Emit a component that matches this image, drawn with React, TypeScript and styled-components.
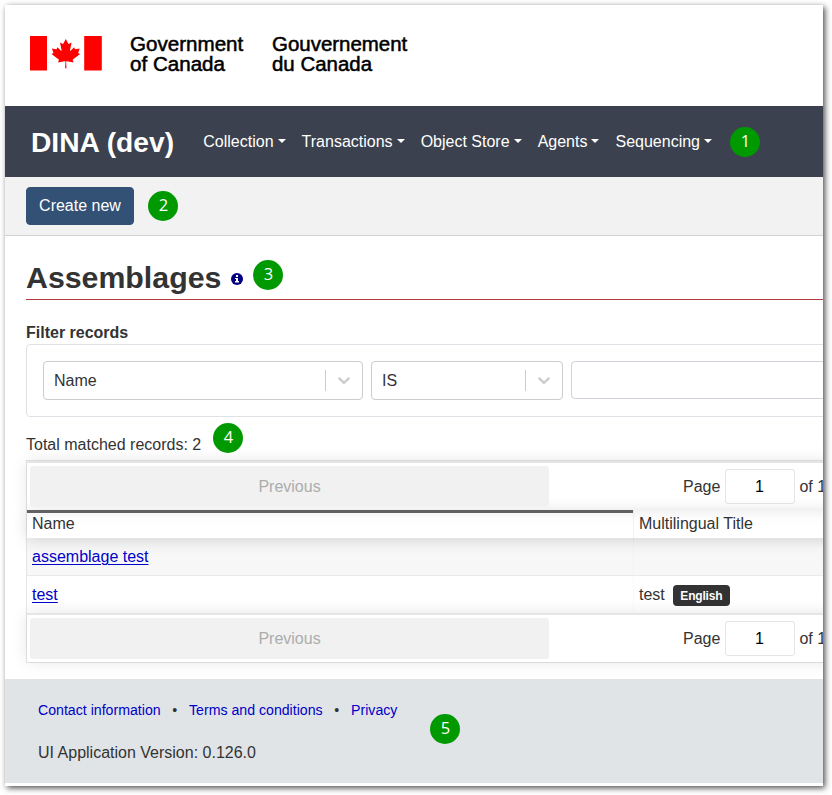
import React from "react";
import styled, { createGlobalStyle } from "styled-components";

const GlobalStyle = createGlobalStyle`
  * { box-sizing: border-box; }
  body {
    margin: 0;
    background: #fff;
    color: #333;
    font: 16px/24px "Liberation Sans", Arial, sans-serif;
    overflow: hidden;
  }
`;

const Stage = styled.div`
  width: 832px;
  height: 795px;
  padding: 5px 9px 9px 5px;
  position: relative;
  overflow: hidden;
`;

const Page = styled.div`
  width: 818px;
  height: 781px;
  overflow: hidden;
  background: #fff;
  box-shadow: 2px 2px 6px 0 rgba(0, 0, 0, 0.7);
`;

const Header = styled.header`
  height: 101px;
  padding: 26px 0 0 25px;
`;

const Nav = styled.nav`
  height: 71px;
  padding: 0 26px;
  display: flex;
  background: #3b414e;
  color: #fff;
`;

const Brand = styled.div`
  width: 172.3px;
  font-size: 28.2px;
  line-height: 72px;
  font-weight: 700;
  white-space: nowrap;
`;

const Menu = styled.div`
  display: flex;
  gap: 16.05px;
  line-height: 72px;
`;

const MenuItem = styled.span`
  white-space: nowrap;
  &::after {
    content: "";
    display: inline-block;
    margin-left: 4px;
    vertical-align: 4px;
    border-top: 4.8px solid;
    border-left: 4.8px solid transparent;
    border-right: 4.8px solid transparent;
  }
`;

const Toolbar = styled.div`
  height: 59px;
  padding: 10px 21px;
  background: #f2f2f2;
  border-bottom: 1px solid #d3d3d3;
`;

const CreateButton = styled.button`
  display: block;
  width: 108px;
  height: 38px;
  padding: 0;
  border: 1px solid #335075;
  border-radius: 4px;
  background: #335075;
  color: #fff;
  font: inherit;
`;

const Content = styled.main`
  height: 443px;
  padding-left: 21px;
`;

const Title = styled.h1`
  display: flex;
  align-items: center;
  margin: 0;
  height: 64px;
  padding-top: 20px;
  border-bottom: 1px solid #af3c43;
  font-size: 30.3px;
  line-height: 42px;
`;

const InfoIcon = styled.svg`
  margin: 3px 0 0 10px;
`;

const Label = styled.div`
  margin: 21px 0 -1px;
  font-weight: 700;
`;

const FilterBox = styled.div`
  width: 1000px;
  height: 73px;
  padding: 16px;
  display: flex;
  gap: 8px;
  border: 1px solid #dee2e6;
  border-radius: 4px;
`;

const Select = styled.div<{ $width: number }>`
  display: flex;
  align-items: center;
  width: ${(p) => p.$width}px;
  height: 39px;
  flex: none;
  padding-left: 10px;
  border: 1px solid #ccc;
  border-radius: 4px;
`;

const SelectValue = styled.span`
  flex: 1;
  line-height: 38px;
  height: 37px;
`;

const Divider = styled.span`
  width: 1px;
  height: 21px;
  background: #ccc;
`;

const Chevron = styled.svg`
  margin: -1px 8px 0;
`;

const TextInput = styled.div`
  width: 400px;
  height: 38px;
  border: 1px solid #ced4da;
  border-radius: 4px;
`;

const Total = styled.div`
  margin: 16px 0 3px;
`;

const Table = styled.div`
  width: 1824px;
  border: 1px solid rgba(0, 0, 0, 0.1);
`;

const Pagination = styled.div`
  position: relative;
  z-index: 1;
  height: 49px;
  display: flex;
  align-items: center;
  padding: 3px;
  border-top: 2px solid rgba(0, 0, 0, 0.1);
  box-shadow: 0 0 15px 0 rgba(0, 0, 0, 0.1);
`;

const Previous = styled.div`
  width: 519px;
  height: 41px;
  border-radius: 3px;
  background: #f1f1f1;
  color: #acacac;
  line-height: 42px;
  text-align: center;
`;

const PageInfo = styled.div`
  display: flex;
  align-items: center;
  margin-left: 134px;
  line-height: 40px;
  gap: 4.5px;
`;

const PageNumber = styled.span`
  width: 70px;
  height: 35px;
  padding-right: 1px;
  border: 1px solid rgba(0, 0, 0, 0.1);
  border-radius: 3px;
  color: #000;
  line-height: 33px;
  text-align: center;
`;

const HeadRow = styled.div`
  position: relative;
  display: flex;
  height: 28px;
  box-shadow: 0 2px 15px 0 rgba(0, 0, 0, 0.15);
`;

const HeadCell = styled.div<{ $sorted?: boolean }>`
  width: 607px;
  padding: 2px 5px;
  border-right: 1px solid rgba(0, 0, 0, 0.05);
  box-shadow: ${(p) => (p.$sorted ? "inset 0 3px 0 0 rgba(0,0,0,.6)" : "none")};
`;

const Row = styled.div<{ $odd?: boolean }>`
  display: flex;
  height: ${(p) => (p.$odd ? 38 : 37)}px;
  background: ${(p) => (p.$odd ? "rgba(0,0,0,.03)" : "transparent")};
  border-bottom: ${(p) => (p.$odd ? "1px solid rgba(0,0,0,.05)" : "0")};
`;

const Cell = styled.div`
  display: flex;
  gap: 8px;
  width: 607px;
  padding: 7px 5px;
  border-right: 1px solid rgba(0, 0, 0, 0.02);
`;

const RecordLink = styled.a`
  color: #0000c8;
  text-decoration: underline;
  text-underline-offset: 2px;
  text-decoration-thickness: 1px;
`;

const Language = styled.span`
  width: 57px;
  height: 21px;
  margin-top: 2px;
  border-radius: 4px;
  background: #333;
  color: #fff;
  font-size: 12px;
  font-weight: 700;
  letter-spacing: -0.2px;
  line-height: 22px;
  text-align: center;
`;

const Footer = styled.footer`
  height: 104px;
  padding: 19px 33px;
  background: #e0e4e7;
`;

const FooterLinks = styled.div`
  display: flex;
  font-size: 14.15px;
`;

const FooterLink = styled.a`
  color: #0000c8;
`;

const Bullet = styled.span`
  width: 28.4px;
  text-align: center;
`;

const Version = styled.div`
  margin-top: 19px;
`;

const Marker = styled.span<{ $x: number; $y: number }>`
  position: absolute;
  z-index: 3;
  left: ${(p) => p.$x}px;
  top: ${(p) => p.$y}px;
  width: 30px;
  height: 30px;
  border-radius: 50%;
  background: #090;
  color: #fff;
  font: 16.5px/28px "Open Sans", sans-serif;
  text-align: center;
`;

const menus = ["Collection", "Transactions", "Object Store", "Agents", "Sequencing"];
const markers = [
  [730.4, 127.4],
  [148.4, 191.4],
  [253.4, 260.4],
  [213.4, 423.4],
  [430.4, 714.4],
];

const Wordmark = () => (
  <svg width="400" height="50" viewBox="30 31 400 50" role="img" aria-label="Government of Canada">
    <path fill="#f00" d="M30 36h17v34.500H30zM84.200 36h17.600v34.500H84.200z" />
    <path
      fill="#f00"
      transform="translate(65.800 53.500) scale(.0077 .0073)"
      d="M-90 2030l45-863a95 95 0 0 0-111-98l-859 151 116-320a65 65 0 0 0-20-73l-941-762 212-99a65 65 0 0 0 34-79l-186-572 542 115a65 65 0 0 0 73-38l105-247 423 454a65 65 0 0 0 111-57l-204-1052 327 189a65 65 0 0 0 91-27l332-652 332 652a65 65 0 0 0 91 27l327-189-204 1052a65 65 0 0 0 111 57l423-454 105 247a65 65 0 0 0 73 38l542-115-186 572a65 65 0 0 0 34 79l212 99-941 762a65 65 0 0 0-20 73l116 320-859-151a95 95 0 0 0-111 98l45 863z"
    />
    <g fontSize="19.500" fill="#000" stroke="#000" strokeWidth=".5">
      <text x="130" y="50.500" textLength="113.300" lengthAdjust="spacingAndGlyphs">Government</text>
      <text x="130" y="70.500" textLength="95" lengthAdjust="spacingAndGlyphs">of Canada</text>
      <text x="272" y="50.500" textLength="135.300" lengthAdjust="spacingAndGlyphs">Gouvernement</text>
      <text x="272" y="70.500" textLength="100" lengthAdjust="spacingAndGlyphs">du Canada</text>
    </g>
  </svg>
);

const Dropdown = ({ value, width }: { value: string; width: number }) => (
  <Select $width={width}>
    <SelectValue>{value}</SelectValue>
    <Divider />
    <Chevron width="20" height="20" viewBox="0 0 20 20" fill="#ccc">
      <path d="M4.516 7.548c.436-.446 1.043-.481 1.576 0L10 11.295l3.908-3.747c.533-.481 1.141-.446 1.574 0 .436.445.408 1.197 0 1.615-.406.418-4.695 4.502-4.695 4.502a1.095 1.095 0 0 1-1.576 0S4.924 9.581 4.516 9.163s-.436-1.170 0-1.615z" />
    </Chevron>
  </Select>
);

const Pager = () => (
  <Pagination>
    <Previous>Previous</Previous>
    <PageInfo>
      <span>Page</span>
      <PageNumber>1</PageNumber>
      <span>of 1</span>
    </PageInfo>
  </Pagination>
);

export default function App() {
  return (
    <Stage>
      <GlobalStyle />
      <Page>
        <Header><Wordmark /></Header>
        <Nav>
          <Brand>DINA (dev)</Brand>
          <Menu>{menus.map((m) => <MenuItem key={m}>{m}</MenuItem>)}</Menu>
        </Nav>
        <Toolbar><CreateButton>Create new</CreateButton></Toolbar>
        <Content>
          <Title>
            Assemblages
            <InfoIcon width="12" height="12" viewBox="0 0 12 12">
              <circle cx="6" cy="6" r="6" fill="#000080" />
              <path fill="#fff" d="M5 2h2v2H5zM4 5h3v3h1v1.500H4V8h1V6H4z" />
            </InfoIcon>
          </Title>
          <Label>Filter records</Label>
          <FilterBox>
            <Dropdown value="Name" width={320} />
            <Dropdown value="IS" width={192} />
            <TextInput />
          </FilterBox>
          <Total>Total matched records: 2</Total>
          <Table>
            <Pager />
            <HeadRow>
              <HeadCell $sorted>Name</HeadCell>
              <HeadCell>Multilingual Title</HeadCell>
            </HeadRow>
            <Row $odd>
              <Cell><RecordLink>assemblage test</RecordLink></Cell>
              <Cell />
            </Row>
            <Row>
              <Cell><RecordLink>test</RecordLink></Cell>
              <Cell>test<Language>English</Language></Cell>
            </Row>
            <Pager />
          </Table>
        </Content>
        <Footer>
          <FooterLinks>
            <FooterLink>Contact information</FooterLink>
            <Bullet>•</Bullet>
            <FooterLink>Terms and conditions</FooterLink>
            <Bullet>•</Bullet>
            <FooterLink>Privacy</FooterLink>
          </FooterLinks>
          <Version>UI Application Version: 0.126.0</Version>
        </Footer>
      </Page>
      {markers.map(([x, y], i) => <Marker key={i} $x={x} $y={y}>{i + 1}</Marker>)}
    </Stage>
  );
}
